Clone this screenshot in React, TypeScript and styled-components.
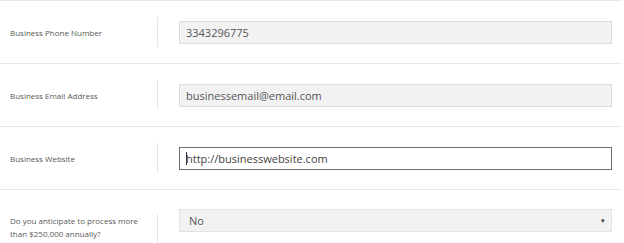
import styled, { createGlobalStyle } from 'styled-components';

const GlobalStyle = createGlobalStyle`
  body {
    margin: 0;
    background: #ffffff;
    font-family: 'Open Sans', 'Liberation Sans', sans-serif;
  }
`;

const fields = [
  { label: 'Business Phone Number', value: '3343296775', kind: 'readonly' },
  { label: 'Business Email Address', value: 'businessemail@email.com', kind: 'readonly' },
  { label: 'Business Website', value: 'http://businesswebsite.com', kind: 'focused' },
  { label: 'Do you anticipate to process more than $250,000 annually?', value: 'No', kind: 'select' },
];

const App = () => {
  return (
    <>
      <GlobalStyle />
      <Form>
        {fields.map((f) => (
          <Row key={f.label} $tall={f.kind === 'select'}>
            <LabelCell $tall={f.kind === 'select'}>
              <Label>{f.label}</Label>
            </LabelCell>
            {f.kind === 'select' ? (
              <SelectBox>
                <span>{f.value}</span>
                <Caret>▾</Caret>
              </SelectBox>
            ) : (
              <InputBox $focused={f.kind === 'focused'}>
                {f.kind === 'focused' && <Cursor />}
                {f.value}
              </InputBox>
            )}
          </Row>
        ))}
      </Form>
    </>
  );
};

const Form = styled.div`
  width: 622px;
  height: 243px;
  overflow: hidden;
  display: flex;
  flex-direction: column;
`;

const Row = styled.div<{ $tall?: boolean }>`
  display: flex;
  flex-shrink: 0;
  align-items: flex-start;
  padding: 16px 0 16px;
  border-top: 1px solid #e8e8e8;
  min-height: ${(p) => (p.$tall ? '60px' : '30px')};
`;

const LabelCell = styled.div<{ $tall?: boolean }>`
  width: 158px;
  box-sizing: border-box;
  padding-left: 10px;
  padding-right: 12px;
  min-height: ${(p) => (p.$tall ? '40px' : '30px')};
  margin-top: ${(p) => (p.$tall ? '8px' : '0')};
  border-right: 1px solid #e6e6e6;
  display: flex;
  align-items: ${(p) => (p.$tall ? 'flex-start' : 'center')};
`;

const Label = styled.div`
  font-size: 8px;
  line-height: 13px;
  color: #595959;
`;

const InputBox = styled.div<{ $focused?: boolean }>`
  flex: 1;
  margin: 4px 10px 0 21px;
  height: 23px;
  box-sizing: border-box;
  padding: 0 6px;
  display: flex;
  align-items: center;
  font-size: 11px;
  color: ${(p) => (p.$focused ? '#444444' : '#555555')};
  background: ${(p) => (p.$focused ? '#ffffff' : '#f2f2f2')};
  border: 1px solid ${(p) => (p.$focused ? '#6e6e6e' : '#dedede')};
`;

const Cursor = styled.span`
  width: 1px;
  height: 13px;
  background: #333333;
  margin-right: -1px;
`;

const SelectBox = styled.div`
  flex: 1;
  margin: 3px 10px 0 21px;
  height: 23px;
  box-sizing: border-box;
  padding: 0 6px 0 9px;
  display: flex;
  align-items: center;
  justify-content: space-between;
  font-size: 11px;
  color: #555555;
  background: #f2f2f2;
  border: 1px solid #e3e3e3;
`;

const Caret = styled.span`
  font-size: 7px;
  color: #333333;
`;

export default App;
